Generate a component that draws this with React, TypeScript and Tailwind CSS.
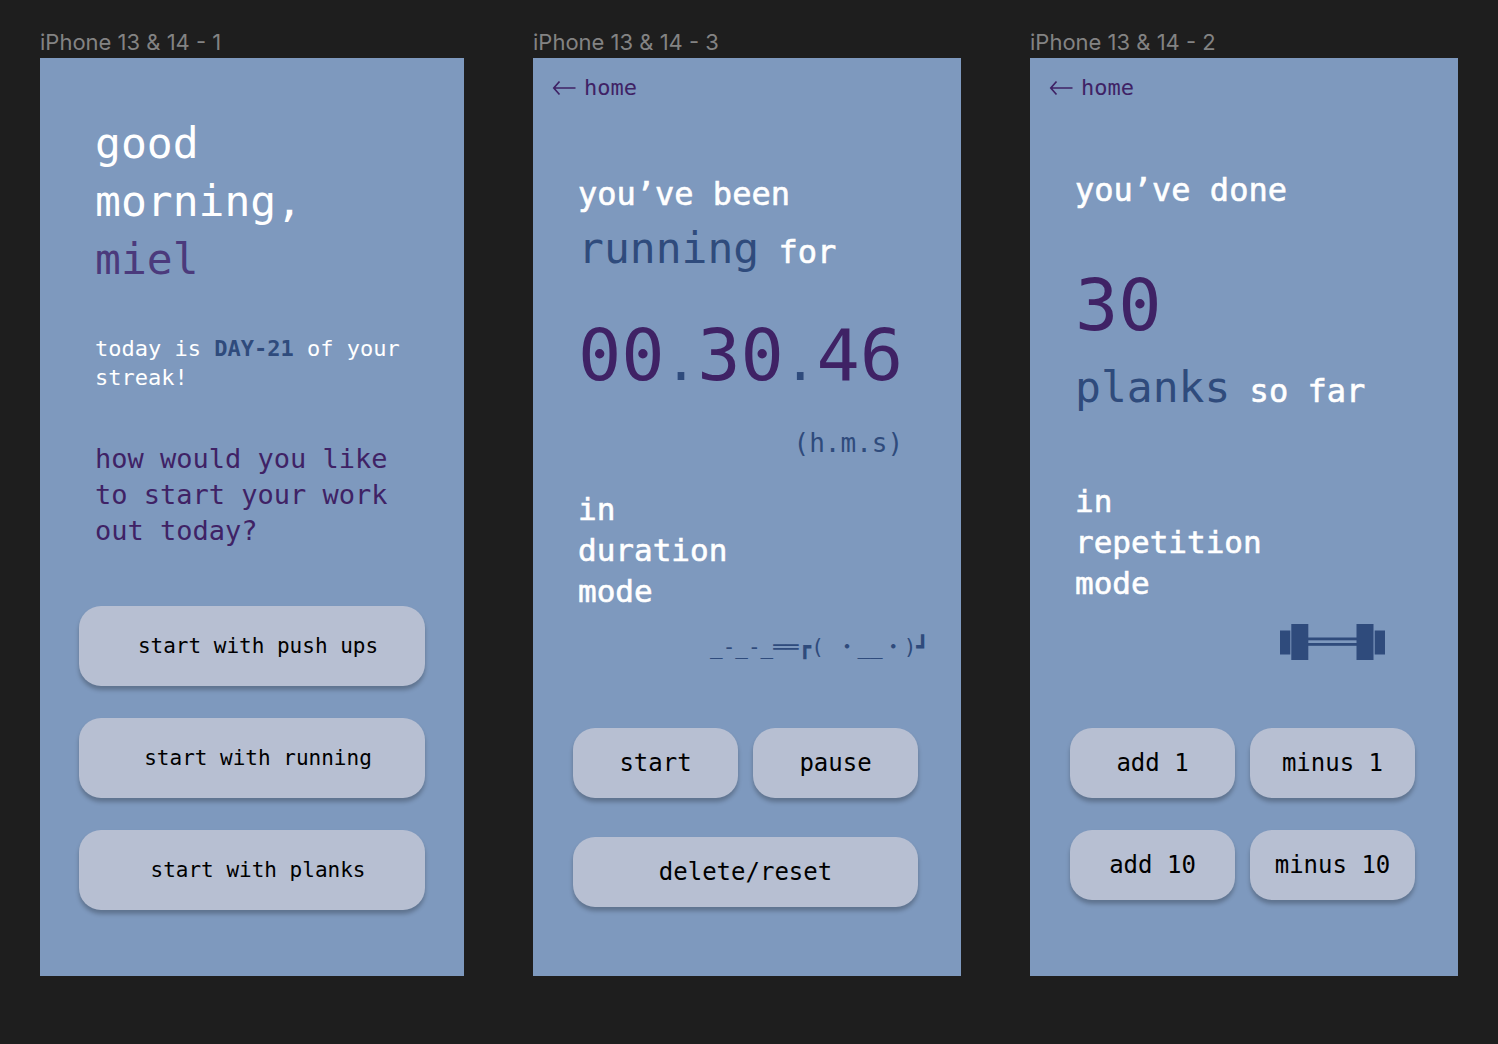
import type { ReactNode } from "react";

function Frame({ title, children }: { title: string; children: ReactNode }) {
  return (
    <section className="flex min-w-0 flex-col">
      <h2 className="font-['Inter',sans-serif] text-[22px] leading-8 whitespace-nowrap text-[#838383] [font-optical-sizing:none]">
        {title}
      </h2>
      <div className="flex grow flex-col bg-[#7e99be] font-['DejaVu_Sans_Mono',monospace]">
        {children}
      </div>
    </section>
  );
}

function HomeLink() {
  return (
    <a
      href="#home"
      className="ml-[19px] mt-[14px] flex w-fit items-center gap-2 text-[22px] leading-8 text-[#3f2265]"
    >
      <svg
        width="24"
        height="16"
        viewBox="0 0 24 16"
        fill="none"
        stroke="currentColor"
        strokeWidth="1.7"
        aria-hidden="true"
      >
        <path d="M7.5 1.5 L1.8 8 L7.5 14.5 M1.8 8 H23.5" />
      </svg>
      home
    </a>
  );
}

function StartButton({ children }: { children: ReactNode }) {
  return (
    <button
      type="button"
      className="h-20 rounded-[22px] bg-[#b7bfd2] pl-3 text-[21px] leading-7 whitespace-nowrap text-black shadow-[0_4px_4px_rgba(0,0,0,0.25)]"
    >
      {children}
    </button>
  );
}

function ActionButton({ children, wide }: { children: ReactNode; wide?: boolean }) {
  return (
    <button
      type="button"
      className={
        "h-[70px] rounded-[22px] bg-[#b7bfd2] text-2xl whitespace-nowrap text-black shadow-[0_4px_4px_rgba(0,0,0,0.25)]" +
        (wide ? " col-span-2" : "")
      }
    >
      {children}
    </button>
  );
}

function Dumbbell() {
  return (
    <svg
      width="106"
      height="37"
      viewBox="0 0 106 37"
      fill="#2f4b7c"
      role="img"
      aria-label="dumbbell"
      className="mr-[72px] mt-5 self-end"
    >
      <rect x="0" y="6.5" width="10.3" height="24" />
      <rect x="11.3" y="0" width="17" height="36" />
      <rect x="28" y="13.5" width="49" height="2.8" />
      <rect x="28" y="19" width="49" height="2.8" />
      <rect x="76.5" y="0" width="17" height="36" />
      <rect x="94.7" y="6.5" width="10.3" height="24" />
    </svg>
  );
}

export default function App() {
  return (
    <main className="grid min-h-screen grid-cols-[424fr_428fr_428fr] items-start gap-x-[69px] bg-[#1e1e1e] px-10 pt-[26px] pb-[68px]">
      <Frame title="iPhone 13 & 14 - 1">
        <div className="px-[55px] pt-14">
          <h1 className="text-[43px] leading-[58px] text-white">
            good
            <br />
            morning,
            <br />
            <span className="text-[#4b3a7c]">miel</span>
          </h1>
          <p className="mt-[46px] text-[22px] leading-[29px] whitespace-nowrap text-white">
            today is <strong className="font-bold text-[#2f4b7c]">DAY-21</strong> of your
            <br />
            streak!
          </p>
          <p className="mt-[49px] text-[27px] leading-9 whitespace-nowrap text-[#3f2265]">
            how would you like
            <br />
            to start your work
            <br />
            out today?
          </p>
        </div>
        <div className="mt-[57px] grid gap-8 px-[39px] pb-[66px]">
          <StartButton>start with push ups</StartButton>
          <StartButton>start with running</StartButton>
          <StartButton>start with planks</StartButton>
        </div>
      </Frame>

      <Frame title="iPhone 13 & 14 - 3">
        <HomeLink />
        <div className="pl-[45px]">
          <p className="mt-[61px] text-[32px] leading-[58px] whitespace-nowrap text-white [-webkit-text-stroke:0.6px_white]">
            you’ve been
            <br />
            <span className="text-[43px] leading-none text-[#2f4b7c] [-webkit-text-stroke:0]">running</span> for
          </p>
          <div className="mt-[26px] w-fit">
            <p className="text-[72px] leading-[96px] whitespace-nowrap text-[#3f2265]">
              00<span className="text-[54px] leading-none text-[#2f4b7c]">.</span>30
              <span className="text-[54px] leading-none text-[#2f4b7c]">.</span>46
            </p>
            <p className="mt-[22px] text-right text-[26px] leading-9 text-[#2f4b7c]">(h.m.s)</p>
          </div>
          <p className="mt-7 text-[31px] leading-[41px] text-white [-webkit-text-stroke:0.6px_white]">
            in
            <br />
            duration
            <br />
            mode
          </p>
        </div>
        <p className="mt-[19px] mr-8 self-end font-['DejaVu_Sans_Mono','Noto_Sans_CJK_JP',monospace] text-[21px] leading-8 whitespace-nowrap text-[#2f4b7c]">
          _-_-_══┏( ・__・)┛
        </p>
        <div className="mt-[65px] grid grid-cols-2 gap-x-[15px] gap-y-[39px] pr-[43px] pb-[69px] pl-10">
          <ActionButton>start</ActionButton>
          <ActionButton>pause</ActionButton>
          <ActionButton wide>delete/reset</ActionButton>
        </div>
      </Frame>

      <Frame title="iPhone 13 & 14 - 2">
        <HomeLink />
        <div className="pl-[45px]">
          <p className="mt-[57px] text-[32px] leading-[58px] whitespace-nowrap text-white [-webkit-text-stroke:0.6px_white]">
            you’ve done
          </p>
          <p className="mt-[38px] text-[72px] leading-[96px] text-[#3f2265]">30</p>
          <p className="mt-[9px] text-[32px] leading-[58px] whitespace-nowrap text-white [-webkit-text-stroke:0.6px_white]">
            <span className="text-[43px] leading-none text-[#2f4b7c] [-webkit-text-stroke:0]">planks</span> so far
          </p>
          <p className="mt-[61px] text-[31px] leading-[41px] text-white [-webkit-text-stroke:0.6px_white]">
            in
            <br />
            repetition
            <br />
            mode
          </p>
        </div>
        <Dumbbell />
        <div className="mt-[67px] grid grid-cols-2 gap-x-[15px] gap-y-8 pr-[43px] pb-[76px] pl-10">
          <ActionButton>add 1</ActionButton>
          <ActionButton>minus 1</ActionButton>
          <ActionButton>add 10</ActionButton>
          <ActionButton>minus 10</ActionButton>
        </div>
      </Frame>
    </main>
  );
}
